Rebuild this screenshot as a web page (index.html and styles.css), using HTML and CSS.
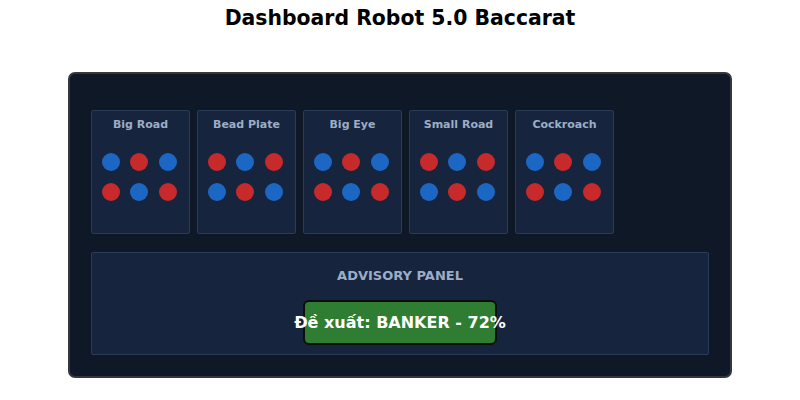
FILE: index.html
```html
<!DOCTYPE html>
<html lang="vi">
<head>
<meta charset="utf-8">
<title>Dashboard Robot 5.0 Baccarat</title>
<link rel="stylesheet" href="styles.css">
</head>
<body>
  <h1 class="page-title">Dashboard Robot 5.0 Baccarat</h1>
  <main class="board">
    <section class="roads">
      <div class="road">
        <div class="road-name">Big Road</div>
        <div class="dots">
          <span class="dot p"></span><span class="dot b"></span><span class="dot p"></span>
          <span class="dot b"></span><span class="dot p"></span><span class="dot b"></span>
        </div>
      </div>
      <div class="road">
        <div class="road-name">Bead Plate</div>
        <div class="dots">
          <span class="dot b"></span><span class="dot p"></span><span class="dot b"></span>
          <span class="dot p"></span><span class="dot b"></span><span class="dot p"></span>
        </div>
      </div>
      <div class="road">
        <div class="road-name">Big Eye</div>
        <div class="dots">
          <span class="dot p"></span><span class="dot b"></span><span class="dot p"></span>
          <span class="dot b"></span><span class="dot p"></span><span class="dot b"></span>
        </div>
      </div>
      <div class="road">
        <div class="road-name">Small Road</div>
        <div class="dots">
          <span class="dot b"></span><span class="dot p"></span><span class="dot b"></span>
          <span class="dot p"></span><span class="dot b"></span><span class="dot p"></span>
        </div>
      </div>
      <div class="road">
        <div class="road-name">Cockroach</div>
        <div class="dots">
          <span class="dot p"></span><span class="dot b"></span><span class="dot p"></span>
          <span class="dot b"></span><span class="dot p"></span><span class="dot b"></span>
        </div>
      </div>
    </section>
    <section class="advisory">
      <div class="advisory-title">ADVISORY PANEL</div>
      <div class="suggestion">Đề xuất: BANKER - 72%</div>
    </section>
  </main>
</body>
</html>
```

FILE: styles.css
```css
* {
  box-sizing: border-box;
}

body {
  margin: 0;
  background: #ffffff;
  font-family: "DejaVu Sans", "Noto Sans", sans-serif;
}

.page-title {
  margin: 7px 0 0;
  font-size: 20.4px;
  font-weight: bold;
  line-height: 23px;
  text-align: center;
  color: #000000;
}

.board {
  width: 664px;
  margin: 42px auto 0;
  padding: 36px 21px 21px;
  background: #0f1827;
  border: 2px solid #34373e;
  border-radius: 7px;
}

.roads {
  display: flex;
  gap: 7px;
}

.road {
  width: 99px;
  height: 124px;
  padding-top: 7px;
  background: #16253d;
  border: 1px solid #2a3b56;
  border-radius: 2px;
}

.road-name {
  font-size: 11px;
  font-weight: bold;
  line-height: 13px;
  text-align: center;
  color: #9cadc6;
}

.dots {
  display: grid;
  grid-template-columns: repeat(3, 18px);
  column-gap: 10.5px;
  row-gap: 12px;
  justify-content: center;
  margin-top: 22px;
  padding-right: 3px;
}

.dot {
  width: 18px;
  height: 18px;
  border-radius: 50%;
}

/* player = blue, banker = red */
.dot.p {
  background: #1c67c4;
}

.dot.b {
  background: #c62a2a;
}

.advisory {
  display: flex;
  flex-direction: column;
  align-items: center;
  margin-top: 18px;
  padding: 14px 0 9px;
  background: #16253d;
  border: 1px solid #2a3b56;
  border-radius: 2px;
}

.advisory-title {
  font-size: 13px;
  font-weight: bold;
  line-height: 18px;
  color: #9cadc6;
}

.suggestion {
  display: flex;
  justify-content: center;
  align-items: center;
  width: 194px;
  height: 45px;
  margin-top: 15px;
  background: #2e7d32;
  border: 2px solid #0a0f0a;
  border-radius: 6px;
  font-size: 16px;
  font-weight: bold;
  color: #ffffff;
  white-space: nowrap;
}
```
